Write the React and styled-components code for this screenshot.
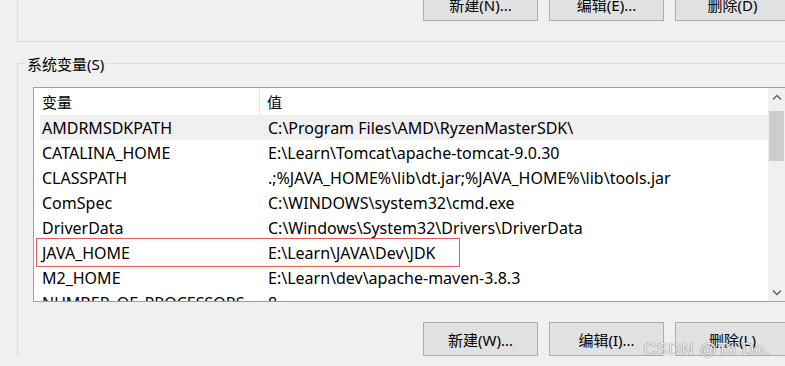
import React from "react";
import styled, { createGlobalStyle } from "styled-components";

const GlobalStyle = createGlobalStyle`
  body {
    margin: 0;
    background: #f0f0f0;
    font-family: "Noto Sans", "Noto Sans CJK SC", sans-serif;
  }
`;

const Page = styled.div`
  position: relative;
  width: 785px;
  height: 366px;
  overflow: hidden;
  background: #f0f0f0;
  color: #000;
`;

const UserGroup = styled.div`
  margin-left: 17px;
  height: 42px;
  box-sizing: border-box;
  border-left: 1px solid #dcdcdc;
  border-bottom: 1px solid #dcdcdc;
  display: flex;
  align-items: flex-end;
  padding-bottom: 20px;
`;

const ButtonRow = styled.div`
  display: flex;
  gap: 11px;
  padding-left: ${(p) => p.$indent || 0}px;
  margin-top: ${(p) => p.$top || 0}px;
`;

const Button = styled.button`
  flex: none;
  width: 115px;
  height: 34px;
  box-sizing: border-box;
  background: #e1e1e1;
  border: 1px solid #adadad;
  border-radius: 0;
  font-family: "Noto Sans", "Noto Sans CJK SC", sans-serif;
  font-size: 15px;
  color: #000;
  padding: 0;
`;

const SystemGroup = styled.fieldset`
  margin: 11px 0 0 17px;
  padding: 0;
  width: 790px;
  min-width: 0;
  box-sizing: border-box;
  border: 1px solid #dcdcdc;
  border-right: none;
  border-bottom: none;
`;

const Legend = styled.legend`
  margin-left: 7px;
  padding: 0 2px;
  font-size: 15px;
  line-height: 20px;
  transform: translateY(1px);
`;

const ListBox = styled.div`
  margin: 14px 0 0 15px;
  width: 753px;
  height: 215px;
  box-sizing: border-box;
  border: 1px solid #a0a0a0;
  background: #fff;
  display: flex;
  overflow: hidden;
`;

const Table = styled.div`
  flex: 1;
  min-width: 0;
`;

const HeaderRow = styled.div`
  display: grid;
  grid-template-columns: 226px 1fr;
  height: 27px;
  align-items: center;
  font-size: 15px;
`;

const HeaderCell = styled.div`
  height: 100%;
  display: flex;
  align-items: center;
  padding-left: ${(p) => p.$pad}px;
  border-right: ${(p) => (p.$divider ? "1px solid #e5e5e5" : "none")};
`;

const Row = styled.div`
  position: relative;
  margin-left: 6px;
  display: grid;
  grid-template-columns: 220px 1fr;
  height: 25px;
  align-items: center;
  font-size: 16px;
  white-space: nowrap;
  background: ${(p) => (p.$hover ? "#f0f0f0" : "transparent")};
`;

const Cell = styled.div`
  padding-left: ${(p) => p.$pad}px;
  overflow: hidden;
`;

const Highlight = styled.div`
  position: absolute;
  left: -4px;
  top: -2px;
  width: 424px;
  height: 29px;
  box-sizing: border-box;
  border: 1px solid #e8595b;
  pointer-events: none;
`;

const ScrollBar = styled.div`
  width: 17px;
  flex: none;
  background: #f0f0f0;
  display: flex;
  flex-direction: column;
  align-items: center;
`;

const Arrow = styled.div`
  height: 17px;
  width: 17px;
  display: flex;
  align-items: center;
  justify-content: center;
`;

const Thumb = styled.div`
  width: 15px;
  height: 50px;
  margin-top: 6px;
  background: #cdcdcd;
`;

const Spacer = styled.div`
  flex: 1;
`;

const Watermark = styled.div`
  position: absolute;
  right: 15px;
  bottom: 6px;
  font-family: "Liberation Sans", sans-serif;
  font-size: 17px;
  letter-spacing: 0.6px;
  color: rgba(255, 255, 255, 0.9);
  text-shadow: 0 0 1px #777, 0 0 1px #777;
`;

const vars = [
  ["AMDRMSDKPATH", "C:\\Program Files\\AMD\\RyzenMasterSDK\\"],
  ["CATALINA_HOME", "E:\\Learn\\Tomcat\\apache-tomcat-9.0.30"],
  ["CLASSPATH", ".;%JAVA_HOME%\\lib\\dt.jar;%JAVA_HOME%\\lib\\tools.jar"],
  ["ComSpec", "C:\\WINDOWS\\system32\\cmd.exe"],
  ["DriverData", "C:\\Windows\\System32\\Drivers\\DriverData"],
  ["JAVA_HOME", "E:\\Learn\\JAVA\\Dev\\JDK"],
  ["M2_HOME", "E:\\Learn\\dev\\apache-maven-3.8.3"],
  ["NUMBER_OF_PROCESSORS", "8"],
];

const Chevron = ({ up }) => (
  <svg width="10" height="6" viewBox="0 0 10 6">
    <polyline
      points={up ? "1,5.5 5,1.5 9,5.5" : "1,0.5 5,4.5 9,0.5"}
      fill="none"
      stroke="#606060"
      strokeWidth="1.4"
    />
  </svg>
);

const App = () => {
  return (
    <Page>
      <GlobalStyle />
      <UserGroup>
        <ButtonRow $indent={405}>
          <Button>新建(N)...</Button>
          <Button>编辑(E)...</Button>
          <Button>删除(D)</Button>
        </ButtonRow>
      </UserGroup>

      <SystemGroup>
        <Legend>系统变量(S)</Legend>
        <ListBox>
          <Table>
            <HeaderRow>
              <HeaderCell $pad={8} $divider>变量</HeaderCell>
              <HeaderCell $pad={7}>值</HeaderCell>
            </HeaderRow>
            {vars.map(([name, value], i) => (
              <Row key={name} $hover={i === 0}>
                <Cell $pad={2}>{name}</Cell>
                <Cell $pad={8}>{value}</Cell>
                {name === "JAVA_HOME" && <Highlight />}
              </Row>
            ))}
          </Table>
          <ScrollBar>
            <Arrow>
              <Chevron up />
            </Arrow>
            <Thumb />
            <Spacer />
            <Arrow>
              <Chevron />
            </Arrow>
          </ScrollBar>
        </ListBox>
        <ButtonRow $indent={405} $top={20}>
          <Button>新建(W)...</Button>
          <Button>编辑(I)...</Button>
          <Button>删除(L)</Button>
        </ButtonRow>
      </SystemGroup>

      <Watermark>CSDN @To Do.</Watermark>
    </Page>
  );
};

export default App;
